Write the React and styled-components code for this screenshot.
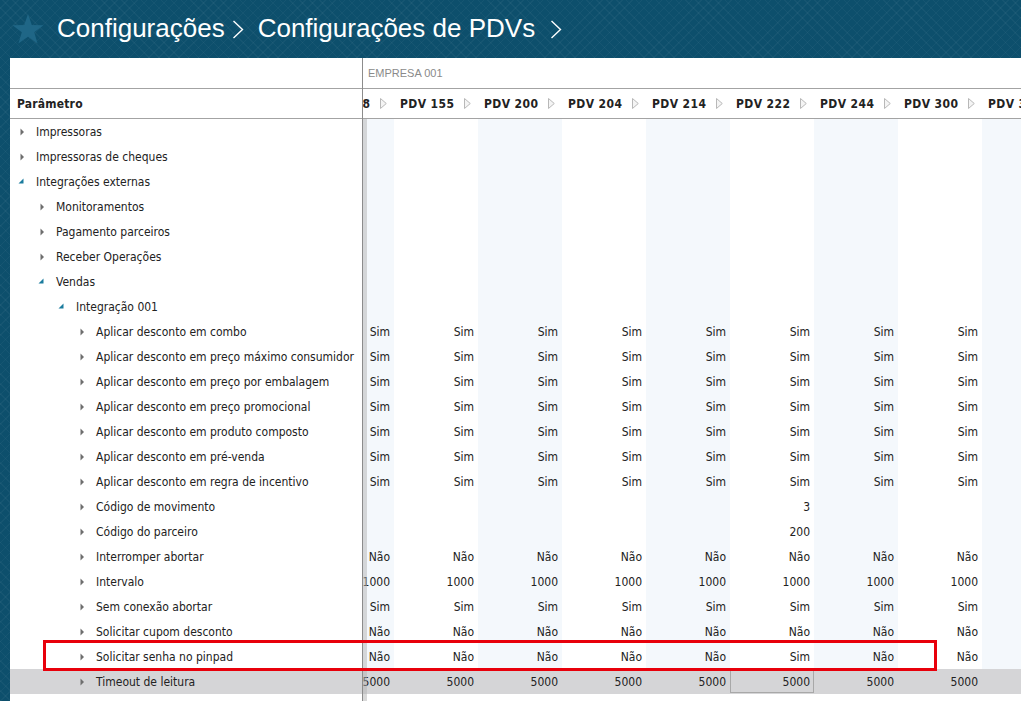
import React, { useLayoutEffect, useRef } from "react";
import styled, { createGlobalStyle } from "styled-components";

const GlobalStyle = createGlobalStyle`
  html, body {
    margin: 0;
    padding: 0;
  }
  body {
    background: #0d4f6c;
    font-family: "DejaVu Sans Condensed", "DejaVu Sans", sans-serif;
    color: #222;
  }
`;

const columns = [
  "PDV 108",
  "PDV 155",
  "PDV 200",
  "PDV 204",
  "PDV 214",
  "PDV 222",
  "PDV 244",
  "PDV 300",
  "PDV 301",
];

const all = (v) => columns.map(() => v);
const only = (i, v) => columns.map((_, k) => (k === i ? v : ""));

const rows = [
  { label: "Impressoras", level: 0 },
  { label: "Impressoras de cheques", level: 0 },
  { label: "Integrações externas", level: 0, open: true },
  { label: "Monitoramentos", level: 1 },
  { label: "Pagamento parceiros", level: 1 },
  { label: "Receber Operações", level: 1 },
  { label: "Vendas", level: 1, open: true },
  { label: "Integração 001", level: 2, open: true },
  { label: "Aplicar desconto em combo", level: 3, values: all("Sim") },
  { label: "Aplicar desconto em preço máximo consumidor", level: 3, values: all("Sim") },
  { label: "Aplicar desconto em preço por embalagem", level: 3, values: all("Sim") },
  { label: "Aplicar desconto em preço promocional", level: 3, values: all("Sim") },
  { label: "Aplicar desconto em produto composto", level: 3, values: all("Sim") },
  { label: "Aplicar desconto em pré-venda", level: 3, values: all("Sim") },
  { label: "Aplicar desconto em regra de incentivo", level: 3, values: all("Sim") },
  { label: "Código de movimento", level: 3, values: only(5, "3") },
  { label: "Código do parceiro", level: 3, values: only(5, "200") },
  { label: "Interromper abortar", level: 3, values: all("Não") },
  { label: "Intervalo", level: 3, values: all("1000") },
  { label: "Sem conexão abortar", level: 3, values: all("Sim") },
  { label: "Solicitar cupom desconto", level: 3, values: all("Não") },
  {
    label: "Solicitar senha no pinpad",
    level: 3,
    values: columns.map((_, k) => (k === 5 ? "Sim" : "Não")),
  },
  { label: "Timeout de leitura", level: 3, values: all("5000"), selected: true },
];

const Page = styled.div`
  position: relative;
  height: 701px;
  overflow: hidden;
  display: flex;
  flex-direction: column;
  background-color: #0d4f6c;
  background-image: repeating-linear-gradient(
      45deg,
      rgba(255, 255, 255, 0.035) 0 1px,
      transparent 1px 7px
    ),
    repeating-linear-gradient(
      -45deg,
      rgba(255, 255, 255, 0.035) 0 1px,
      transparent 1px 7px
    );
`;

const TitleBar = styled.header`
  height: 58px;
  flex: none;
  display: flex;
  align-items: center;
  padding-left: 12px;
  box-sizing: border-box;
`;

const Crumb = styled.span`
  font-family: "Liberation Sans", Arial, sans-serif;
  font-size: 26px;
  color: #fff;
  line-height: 1;
  margin-top: -2px;
`;

const Chevron = styled.svg`
  width: 12px;
  height: 19px;
  margin: 0 ${(p) => p.$after}px 0 ${(p) => p.$before}px;
  flex: none;
`;

const Panel = styled.div`
  flex: 1;
  margin-left: 10px;
  background: #fff;
  display: flex;
  min-height: 0;
`;

const TreePane = styled.div`
  width: 353px;
  flex: none;
  box-sizing: border-box;
  border-right: 1px solid #8c8c8c;
`;

const GroupHead = styled.div`
  height: 30px;
  border-bottom: 1px solid #a3a3a3;
  display: flex;
  align-items: center;
  padding-left: 5px;
  font-family: "Liberation Sans", Arial, sans-serif;
  font-size: 11px;
  color: #8a8a8a;
  white-space: nowrap;
`;

const HeadRow = styled.div`
  height: 29px;
  border-bottom: 1px solid #a3a3a3;
  display: flex;
  align-items: center;
  font-weight: bold;
  font-size: 12px;
  letter-spacing: 0.4px;
  white-space: nowrap;
`;

const ParamHead = styled(HeadRow)`
  padding-left: 7px;
  letter-spacing: 0.2px;
`;

const TreeRow = styled.div`
  height: 25px;
  display: flex;
  align-items: center;
  padding-left: ${(p) => 10 + p.$level * 20}px;
  font-size: 12px;
  white-space: nowrap;
  background: ${(p) => (p.$selected ? "#d5d5d7" : "transparent")};
`;

const Toggle = styled.svg`
  width: 16px;
  height: 8px;
  flex: none;
  overflow: visible;
`;

const DataPane = styled.div`
  position: relative;
  flex: 1;
  min-width: 0;
  display: flex;
  flex-direction: column;

  &::after {
    content: "";
    position: absolute;
    left: 0;
    top: 61px;
    bottom: 0;
    width: 4px;
    background: rgba(180, 180, 180, 0.5);
  }
`;

const ScrollArea = styled.div`
  overflow: hidden;
  flex: 1;
`;

const Grid = styled.div`
  width: ${columns.length * 84}px;
`;

const HeadCell = styled.div`
  width: 84px;
  flex: none;
  box-sizing: border-box;
  display: flex;
  align-items: center;
  justify-content: space-between;
  padding: 0 7px 0 6px;
`;

const DataRow = styled.div`
  height: 25px;
  display: flex;
  background: ${(p) => (p.$selected ? "#d5d5d7" : "transparent")};
`;

const Cell = styled.div`
  width: 84px;
  flex: none;
  box-sizing: border-box;
  display: flex;
  align-items: center;
  justify-content: flex-end;
  padding-right: 4px;
  font-size: 12px;
  background: ${(p) => (p.$alt ? "#f4f8fc" : "transparent")};
  ${(p) =>
    p.$current &&
    `
    border: 1px solid #a8a8a8;
    padding-right: 3px;
    margin: 1px 0;
  `}
`;

const Callout = styled.div`
  position: absolute;
  left: 43px;
  top: 640px;
  width: 894px;
  height: 31px;
  box-sizing: border-box;
  border: 3px solid #e8000b;
  pointer-events: none;
`;

const Star = () => (
  <svg width="32" height="32" viewBox="0 0 32 32" style={{ flex: "none", marginRight: 13 }}>
    <polygon
      points="16,1 19.8,12 31.5,12.2 22.2,19.2 25.6,30.5 16,23.7 6.4,30.5 9.8,19.2 0.5,12.2 12.2,12"
      fill="#1f6686"
    />
  </svg>
);

const ChevronIcon = ({ before, after }) => (
  <Chevron viewBox="0 0 12 19" $before={before} $after={after}>
    <polyline points="1.5,1 10.5,9.5 1.5,18" fill="none" stroke="#fff" strokeWidth="1.4" />
  </Chevron>
);

const ToggleIcon = ({ open }) => (
  <Toggle viewBox="0 0 16 8">
    {open ? (
      <polygon points="3.5,0.5 3.5,5.5 -1.5,5.5" fill="#1b7c9e" />
    ) : (
      <polygon points="0.5,0.5 4,4 0.5,7.5" fill="#6e6e6e" />
    )}
  </Toggle>
);

const SortIcon = () => (
  <svg width="7" height="11" viewBox="0 0 7 11" style={{ flex: "none" }}>
    <polygon points="0.5,0.5 6.3,5.5 0.5,10.5" fill="#f4f4f4" stroke="#b8b8b8" strokeWidth="1" />
  </svg>
);

export default function App() {
  const scrollRef = useRef(null);

  useLayoutEffect(() => {
    if (scrollRef.current) scrollRef.current.scrollLeft = 53;
  }, []);

  return (
    <>
      <GlobalStyle />
      <Page>
        <TitleBar>
          <Star />
          <Crumb>Configurações</Crumb>
          <ChevronIcon before={7} after={14} />
          <Crumb>Configurações de PDVs</Crumb>
          <ChevronIcon before={15} after={0} />
        </TitleBar>
        <Panel>
          <TreePane>
            <GroupHead />
            <ParamHead>Parâmetro</ParamHead>
            {rows.map((r) => (
              <TreeRow key={r.label} $level={r.level} $selected={r.selected}>
                <ToggleIcon open={r.open} />
                {r.label}
              </TreeRow>
            ))}
          </TreePane>
          <DataPane>
            <GroupHead>EMPRESA 001</GroupHead>
            <ScrollArea ref={scrollRef}>
              <Grid>
                <HeadRow>
                  {columns.map((c) => (
                    <HeadCell key={c}>
                      {c}
                      <SortIcon />
                    </HeadCell>
                  ))}
                </HeadRow>
                {rows.map((r) => (
                  <DataRow key={r.label} $selected={r.selected}>
                    {columns.map((c, k) => (
                      <Cell
                        key={c}
                        $alt={!r.selected && k % 2 === 0}
                        $current={r.selected && k === 5}
                      >
                        {r.values ? r.values[k] : ""}
                      </Cell>
                    ))}
                  </DataRow>
                ))}
              </Grid>
            </ScrollArea>
          </DataPane>
        </Panel>
        <Callout />
      </Page>
    </>
  );
}
